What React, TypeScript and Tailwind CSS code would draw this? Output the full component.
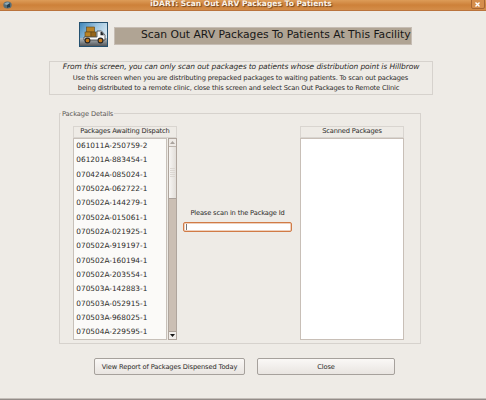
const packages = [
  "061011A-250759-2", "061201A-883454-1", "070424A-085024-1", "070502A-062722-1",
  "070502A-144279-1", "070502A-015061-1", "070502A-021925-1", "070502A-919197-1",
  "070502A-160194-1", "070502A-203554-1", "070503A-142883-1", "070503A-052915-1",
  "070503A-968025-1", "070504A-229595-1",
];

function TruckIcon() {
  return (
    <svg className="block h-[25px] w-[29px] shrink-0" viewBox="0 0 29 25">
      <defs>
        <linearGradient id="sky" x1="0" y1="0" x2="1" y2="0.6">
          <stop offset="0" stopColor="#357fb5" />
          <stop offset="0.5" stopColor="#9cc4df" />
          <stop offset="1" stopColor="#e4eff5" />
        </linearGradient>
        <linearGradient id="road" x1="0" y1="0" x2="0" y2="1">
          <stop offset="0" stopColor="#b4bdc2" />
          <stop offset="1" stopColor="#47494c" />
        </linearGradient>
      </defs>
      <rect width="29" height="25" fill="url(#sky)" />
      <rect y="16" width="29" height="9" fill="url(#road)" />
      <rect x="0.5" y="0.5" width="28" height="24" fill="none" stroke="#24506f" />
      <rect x="7.500" y="5" width="8" height="5" fill="#b98225" stroke="#5d4317" strokeWidth="0.6" />
      <path d="M18 9h4.500L26 13v5H5v-3h13Z" fill="#f7f8f8" stroke="#2b2b2b" strokeWidth="0.7" />
      <rect x="6" y="10" width="6" height="4.500" fill="#b98225" stroke="#5d4317" strokeWidth="0.6" />
      <rect x="12" y="10" width="5" height="4.500" fill="#96651a" stroke="#5d4317" strokeWidth="0.6" />
      <path d="M21.500 10h1.500l2 3.200h-3.500Z" fill="#252a2e" />
      <circle cx="8.500" cy="18.500" r="2.400" fill="#c77a1b" stroke="#292521" strokeWidth="1.100" />
      <circle cx="21.500" cy="18.500" r="2.400" fill="#c77a1b" stroke="#292521" strokeWidth="1.100" />
    </svg>
  );
}

function Header({ children }: { children: string }) {
  return (
    <div className="h-[12px] whitespace-nowrap border border-[#d9d5d0] text-center text-[6.700px] leading-[9px] tracking-[-0.16px]">
      {children}
    </div>
  );
}

function Scrollbar() {
  return (
    <div className="ml-[1px] flex h-[202px] w-[9px] flex-col border border-[#afa59d] bg-[#cbbfb4]">
      <div className="flex h-[8px] items-center justify-center border-b border-[#bdb5ae] bg-[#eeeae6]">
        <svg className="h-[3px] w-[5px]" viewBox="0 0 5 3"><path d="M0 3 2.500 0 5 3Z" fill="#aaa39d" /></svg>
      </div>
      <div className="flex h-[52px] flex-col items-center justify-center gap-px border-b border-[#aba19a] bg-gradient-to-r from-[#f7f5f3] to-[#e2ded9]">
        <i className="h-px w-[5px] bg-[#dcd7d2]" /><i className="h-px w-[5px] bg-[#dcd7d2]" />
        <i className="h-px w-[5px] bg-[#dcd7d2]" /><i className="h-px w-[5px] bg-[#dcd7d2]" />
        <i className="h-px w-[5px] bg-[#dcd7d2]" />
      </div>
      <div className="mt-auto flex h-[8px] items-center justify-center border-t border-[#aaa098] bg-[#f1eeeb]">
        <svg className="h-[3px] w-[5px]" viewBox="0 0 5 3"><path d="M0 0h5L2.500 3Z" fill="#171717" /></svg>
      </div>
    </div>
  );
}

export default function App() {
  return (
    <div className="flex h-[400px] w-[486px] flex-col overflow-hidden bg-[#eeebe6] font-['DejaVu_Sans',sans-serif] text-[#2c2a28]">
      <header className="flex h-[11px] shrink-0 items-start justify-between border-b border-[#ba733c] bg-gradient-to-b from-[#dd9c58] via-[#cd8139] to-[#d48d49] px-[3px]">
        <svg className="mt-px h-[8px] w-[9px]" viewBox="0 0 9 8">
          <ellipse cx="4.500" cy="4" rx="4.200" ry="3.500" fill="#566d77" />
          <path d="M1 3Q4 0 7 2v4L4 7V4Z" fill="#91abb5" /><path d="M4 4l3-2v4L4 7Z" fill="#263e4c" />
        </svg>
        <h1 className="-mt-px mr-[1px] whitespace-nowrap text-[7.550px] font-bold leading-[10px] text-[#faf2e7] [text-shadow:1px_1px_1px_#70451f]">iDART: Scan Out ARV Packages To Patients</h1>
        <button className="-mt-[2px] mr-[-2px] flex h-[11px] w-[14px] items-center justify-center rounded-[2px] border border-[#a86632] bg-[#d58e4c]">
          <svg className="mt-px h-[5px] w-[5px]" viewBox="0 0 5 5"><path d="m.5.5 4 4m0-4-4 4" stroke="#fff" strokeWidth="1.400" /></svg>
        </button>
      </header>

      <section className="ml-[79px] mt-[11px] flex h-[25px] gap-[6px]">
        <TruckIcon />
        <h2 className="mt-[5px] h-[18px] w-[298px] whitespace-nowrap border border-[#c6bdb4] bg-[#b0a494] pl-[26px] text-[10.760px] leading-[13px] text-[#171717]">Scan Out ARV Packages To Patients At This Facility</h2>
      </section>

      <section className="ml-[49px] mt-[14px] h-[34px] w-[384px] whitespace-nowrap border border-[#d6d2cd] text-center">
        <p className="text-[7.500px] italic leading-[10px] tracking-[-0.09px]">From this screen, you can only scan out packages to patients whose distribution point is Hillbrow</p>
        <p className="-ml-[1px] mt-[1px] text-[6.700px] leading-[10px] tracking-[-0.15px]">Use this screen when you are distributing prepacked packages to waiting patients. To scan out packages</p>
        <p className="-ml-[5px] text-[6.700px] leading-[11px] tracking-[-0.16px]">being distributed to a remote clinic, close this screen and select Scan Out Packages to Remote Clinic</p>
      </section>

      <fieldset className="ml-[59px] mt-[13px] h-[236px] w-[362px]">
        <div className="flex h-[10px] items-center gap-[1px] text-[6.700px] tracking-[-0.12px]">
          <i className="h-px w-[2px] bg-[#d6d2cd]" />
          <span className="whitespace-nowrap pt-[1px] leading-[10px] text-[#5b5855]">Package Details</span>
          <i className="h-px grow bg-[#d6d2cd]" />
        </div>
        <div className="-mt-[5px] flex h-[231px] border border-t-0 border-[#d6d2cd] pl-[13px] pt-[13px]">
          <div className="w-[104px]">
            <Header>Packages Awaiting Dispatch</Header>
            <div className="flex">
              <ul className="h-[202px] w-[94px] overflow-hidden border border-[#c7c0b9] bg-[#fbfaf8] pl-[2.300px]">
                {packages.map((id) => <li key={id} className="h-[14.330px] whitespace-nowrap text-[7.360px] leading-[14.500px]">{id}</li>)}
              </ul>
              <Scrollbar />
            </div>
          </div>
          <div className="ml-[6px] mt-[82px] w-[109px]">
            <label className="block whitespace-nowrap text-center text-[6.700px] leading-[10px] tracking-[-0.16px]">Please scan in the Package Id</label>
            <div className="mt-[4px] flex h-[10px] items-center rounded-[2px] border border-[#d17b46] bg-white pl-[2px] shadow-[inset_0_0_0_0.5px_#dea27d]"><i className="h-[6px] w-px bg-[#777]" /></div>
          </div>
          <div className="ml-[8px] w-[104px]">
            <Header>Scanned Packages</Header>
            <div className="h-[202px] border border-[#c8bfb7] bg-white" />
          </div>
        </div>
      </fieldset>

      <section className="ml-[94px] mt-[14px] flex gap-[12px] text-[6.700px] leading-[14px] tracking-[-0.13px]">
        <button className="h-[17px] w-[151px] whitespace-nowrap rounded-[2px] border border-[#a6a19c] bg-gradient-to-b from-[#faf8f6] to-[#e9e5e1]">View Report of Packages Dispensed Today</button>
        <button className="h-[17px] w-[138px] rounded-[2px] border border-[#a6a19c] bg-gradient-to-b from-[#faf8f6] to-[#e9e5e1]">Close</button>
      </section>
      <footer className="mt-auto h-[2px] shrink-0 border-t border-[#c4beb9] bg-[#938c88]" />
    </div>
  );
}
